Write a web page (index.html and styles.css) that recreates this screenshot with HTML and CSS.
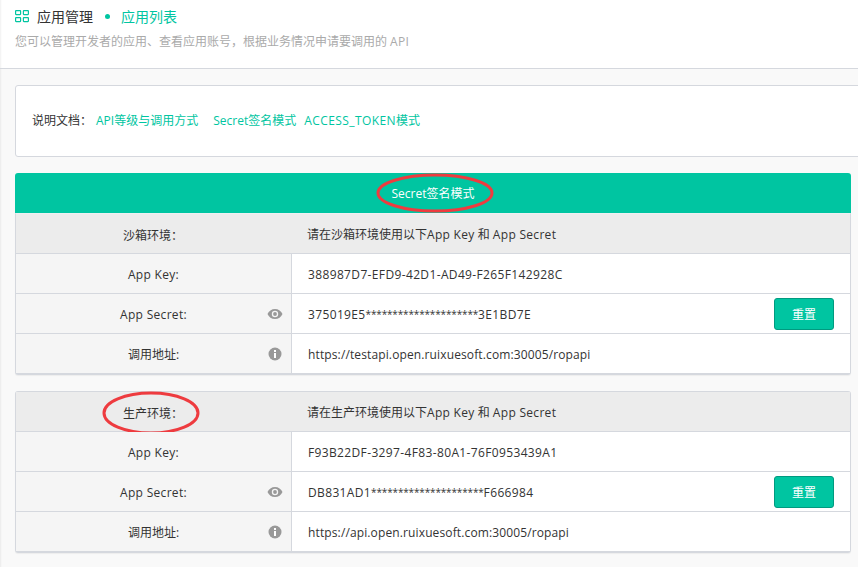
FILE: index.html
```html
<!DOCTYPE html>
<html lang="zh-CN">
<head>
	<meta charset="UTF-8">
	<title>应用列表</title>
	<link rel="stylesheet" href="styles.css">
</head>
<body>
<header class="top">
	<div class="crumbs">
		<svg class="grid-icon" width="14" height="14" viewBox="0 0 14 14" fill="none" stroke="#00c5a1" stroke-width="1.2">
			<rect x="0.6" y="1.6" width="5" height="4" rx="0.5"/>
			<rect x="8.4" y="1.6" width="5" height="4" rx="0.5"/>
			<rect x="0.6" y="8.6" width="5" height="4" rx="0.5"/>
			<rect x="8.4" y="8.6" width="5" height="4" rx="0.5"/>
		</svg>
		<span class="crumb">应用管理</span>
		<span class="dot"></span>
		<span class="crumb current">应用列表</span>
	</div>
	<p class="desc">您可以管理开发者的应用、查看应用账号，根据业务情况申请要调用的<span class="latin api">API</span></p>
</header>

<main class="content">
	<section class="docs">
		<span class="docs-label">说明文档：</span>
		<a class="doc-link first">API等级与调用方式</a>
		<a class="doc-link second">Secret签名模式</a>
		<a class="doc-link third"><span class="token">ACCESS_TOKEN</span>模式</a>
	</section>

	<div class="panel">
		<div class="panel-title">
			<span class="ring-wrap">Secret签名模式
				<svg class="ring ring-title" width="118" height="40" viewBox="0 0 118 40"><ellipse cx="59" cy="20" rx="57" ry="18"/></svg>
			</span>
		</div>
		<div class="env">
			<div class="row head">
				<div class="label">沙箱环境：</div>
				<div class="value"><span>请在沙箱环境使用以下<span class="latin">App Key</span> 和 <span class="latin">App Secret</span></span></div>
			</div>
			<div class="row">
				<div class="label latin">App Key:</div>
				<div class="value"><span class="hex">388987D7-EFD9-42D1-AD49-F265F142928C</span></div>
			</div>
			<div class="row">
				<div class="label latin">App Secret:
					<svg class="side-icon" width="16" height="12" viewBox="0 0 16 12"><path fill="#999" fill-rule="evenodd" d="M8 1C4.600 1 1.800 3 .5 6c1.300 3 4.100 5 7.500 5s6.200-2 7.500-5C14.200 3 11.400 1 8 1zm0 8.200A3.200 3.200 0 1 1 8 2.800a3.200 3.200 0 0 1 0 6.400z"/><circle fill="#999" cx="8" cy="6" r="1.900"/></svg>
				</div>
				<div class="value"><span class="hex">375019E5<span class="stars">*********************</span>3E1BD7E</span><button class="reset" type="button">重置</button></div>
			</div>
			<div class="row">
				<div class="label">调用地址:
					<svg class="side-icon info" width="14" height="14" viewBox="0 0 14 14"><circle fill="#999" cx="7" cy="7" r="6.500"/><rect fill="#fff" x="6" y="6" width="2" height="5"/><rect fill="#fff" x="6" y="3" width="2" height="2"/></svg>
				</div>
				<div class="value"><span class="url">https://testapi.open.ruixuesoft.com:30005/ropapi</span></div>
			</div>
		</div>
	</div>

	<div class="panel second-panel">
		<div class="env boxed">
			<div class="row head">
				<div class="label"><span class="ring-wrap">生产环境：
					<svg class="ring ring-env" width="98" height="44" viewBox="0 0 98 44"><ellipse cx="49" cy="22" rx="47" ry="20"/></svg>
				</span></div>
				<div class="value"><span>请在生产环境使用以下<span class="latin">App Key</span> 和 <span class="latin">App Secret</span></span></div>
			</div>
			<div class="row">
				<div class="label latin">App Key:</div>
				<div class="value"><span class="hex">F93B22DF-3297-4F83-80A1-76F0953439A1</span></div>
			</div>
			<div class="row">
				<div class="label latin">App Secret:
					<svg class="side-icon" width="16" height="12" viewBox="0 0 16 12"><path fill="#999" fill-rule="evenodd" d="M8 1C4.600 1 1.800 3 .5 6c1.300 3 4.100 5 7.500 5s6.200-2 7.500-5C14.200 3 11.400 1 8 1zm0 8.200A3.200 3.200 0 1 1 8 2.800a3.200 3.200 0 0 1 0 6.400z"/><circle fill="#999" cx="8" cy="6" r="1.900"/></svg>
				</div>
				<div class="value"><span class="hex">DB831AD1<span class="stars">*********************</span>F666984</span><button class="reset" type="button">重置</button></div>
			</div>
			<div class="row">
				<div class="label">调用地址:
					<svg class="side-icon info" width="14" height="14" viewBox="0 0 14 14"><circle fill="#999" cx="7" cy="7" r="6.500"/><rect fill="#fff" x="6" y="6" width="2" height="5"/><rect fill="#fff" x="6" y="3" width="2" height="2"/></svg>
				</div>
				<div class="value"><span class="url">https://api.open.ruixuesoft.com:30005/ropapi</span></div>
			</div>
		</div>
	</div>
</main>
</body>
</html>
```
FILE: styles.css
```css
*{
	box-sizing: border-box;
}

html, body{
	margin: 0;
	height: 100%;
}

body{
	width: 858px;
	height: 567px;
	overflow: hidden;
	background: #f9f9f9;
	color: #333;
	font-family: "Open Sans", "Noto Sans CJK SC", sans-serif;
	font-size: 12px;
}

.latin{
	letter-spacing: .3px;
}

/* top header */
.top{
	height: 69px;
	padding: 6px 15px 0;
	background: #fff;
	border-bottom: 1px solid #d5d8de;
	box-shadow: inset 3px 0 2px -2px rgba(0, 0, 0, .06);
}

.crumbs{
	display: flex;
	align-items: center;
	height: 20px;
	font-size: 14px;
}

.grid-icon{
	margin-right: 8px;
}

.dot{
	width: 5px;
	height: 5px;
	margin: 0 11px 0 12px;
	border-radius: 50%;
	background: #00c5a1;
}

.crumb.current{
	color: #00c5a1;
}

.desc{
	margin: 6px 0 0;
	height: 20px;
	line-height: 20px;
	color: #aaa;
}

.api{
	margin-left: 3px;
}

/* content */
.content{
	height: 498px;
	padding: 16px 7px 0 15px;
	box-shadow: inset 3px 0 2px -2px rgba(0, 0, 0, .06);
}

.docs{
	display: flex;
	align-items: center;
	width: 860px;
	height: 72px;
	padding: 0 0 2px 16px;
	background: #fff;
	border: 1px solid #d5d8de;
	border-radius: 3px;
}

.doc-link{
	color: #00c5a1;
}

.doc-link.first{
	margin-left: 4px;
}

.doc-link.second{
	margin-left: 15px;
}

.doc-link.third{
	margin-left: 8px;
}

.token{
	letter-spacing: .42px;
}

.panel{
	margin-top: 16px;
}

.panel-title{
	display: flex;
	align-items: center;
	justify-content: center;
	height: 40px;
	background: #00c5a1;
	border-radius: 3px 3px 0 0;
	color: #fff;
}

.ring-wrap{
	position: relative;
}

.ring{
	position: absolute;
	top: 50%;
	left: 50%;
	transform: translate(-50%, -50%);
	fill: none;
	stroke: #ee3b3f;
	stroke-width: 3;
}

.ring-title{
	margin-left: 2px;
}

.ring-env{
	margin-left: -2px;
}

.env{
	border: solid #d5d8de;
	border-width: 1px 1px 2px;
	border-top-color: #eef0f2;
	border-radius: 0 0 3px 3px;
	box-shadow: 0 1px 1px rgba(0, 0, 0, .05);
}

.env.boxed{
	border-top-color: #d5d8de;
	border-radius: 3px;
}

.row{
	display: flex;
	height: 40px;
	border-bottom: 1px solid #d5d8de;
	background: #fff;
}

.row:last-child{
	height: 39px;
	border-bottom: 0;
}

.label{
	position: relative;
	display: flex;
	align-items: center;
	justify-content: center;
	width: 276px;
	padding-top: 2px;
	background: #f5f5f5;
	border-right: 1px solid #d5d8de;
}

.row:last-child .label{
	padding-top: 0;
}

.value{
	display: flex;
	align-items: center;
	justify-content: space-between;
	flex: 1;
	padding: 2px 16px 0 16px;
}

.hex{
	letter-spacing: .36px;
}

.url{
	letter-spacing: .125px;
}

.stars{
	position: relative;
	top: -1px;
	font-size: 10px;
	letter-spacing: -.15px;
}

.row.head{
	background: #ececec;
}

.row.head .label{
	padding-right: 2px;
	background: transparent;
	border-right: 0;
}

.row.head .value{
	padding: 0 16px 0 15px;
}

.side-icon{
	position: absolute;
	top: 50%;
	right: 8px;
	transform: translateY(-50%);
}

.side-icon.info{
	right: 9px;
}

.reset{
	width: 60px;
	height: 32px;
	margin-top: -2px;
	padding: 0;
	background: #00c5a1;
	border: 1px solid #009a80;
	border-radius: 3px;
	color: #fff;
	font: inherit;
}
```
